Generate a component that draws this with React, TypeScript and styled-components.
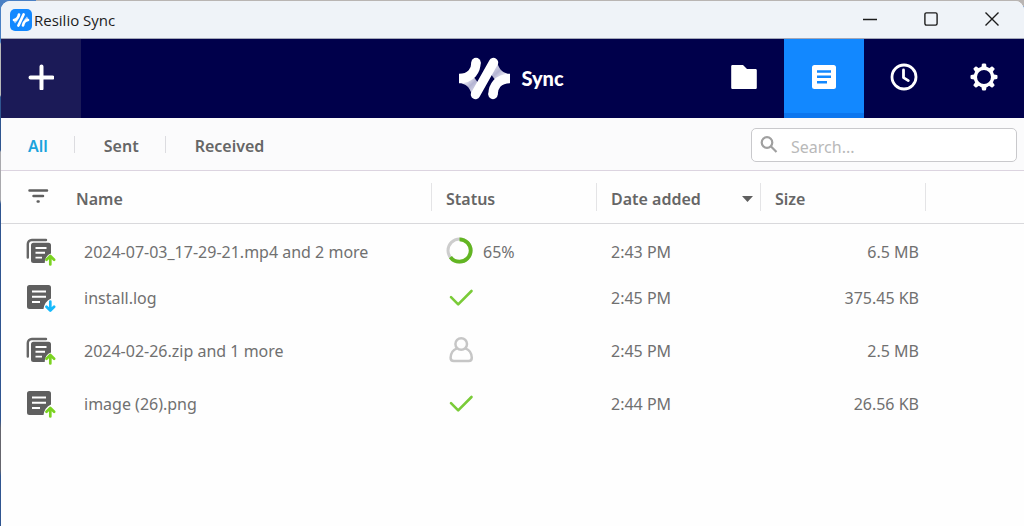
import React, { useState } from "react";
import styled, { createGlobalStyle } from "styled-components";

const GlobalStyle = createGlobalStyle`
  * { box-sizing: border-box; }
  body {
    margin: 0;
    background: #2f5590;
    font-family: "Noto Sans", "Open Sans", sans-serif;
    font-size: 16px;
    color: #707070;
  }
  button, input { font: inherit; }
`;

const Desktop = styled.div`
  min-height: 100vh;
  display: flex;
  padding: 1px 0 0 1px;
  background:
    linear-gradient(to right, #4a80c4 0 36px, #b9b5b3 36px) top / 100% 6px no-repeat,
    linear-gradient(#4a80c4 0 42px, #b8b8b8 44px 95px, #2f5590 97px 150px, #a9a9ad 152px 200px, #2f5590 204px 420px, #65656d 428px 470px, #2f5590 476px);
`;

const Window = styled.div`
  flex: 1;
  min-width: 0;
  display: flex;
  flex-direction: column;
  overflow: hidden;
  background: #fefefe;
  border-radius: 9px 9px 0 0;
`;

const TitleBar = styled.header`
  display: flex;
  align-items: center;
  height: 38px;
  padding: 0 2px 0 9px;
  background: #eff3f8;
  border-bottom: 1px solid #a3a7b8;
`;

const AppName = styled.h1`
  flex: 1;
  margin: 0 0 0 2px;
  font-family: "Open Sans", sans-serif;
  font-size: 15px;
  font-weight: 400;
  line-height: 20px;
  color: #1c1c1c;
`;

const CaptionButton = styled.button`
  display: grid;
  place-items: center;
  width: 61px;
  height: 37px;
  padding: 0 0 1px;
  border: 0;
  background: none;
  color: #1c1c1c;
`;

const Toolbar = styled.nav`
  display: grid;
  grid-template-columns: 1fr auto 1fr;
  align-items: stretch;
  height: 79px;
  background: #00004b;
`;

const ToolGroup = styled.div<{ $end?: boolean }>`
  display: flex;
  justify-content: ${(p) => (p.$end ? "flex-end" : "flex-start")};
`;

const ToolButton = styled.button<{ $tone?: "add" | "active" }>`
  display: grid;
  place-items: center;
  width: 80px;
  padding: 0 0 3px;
  border: 0;
  color: #fff;
  background: ${(p) => (p.$tone === "add" ? "#1b1a57" : p.$tone === "active" ? "#1288ff" : "none")};
  box-shadow: ${(p) => (p.$tone === "active" ? "inset 0 -5px #0c76ee" : "none")};
`;

const Brand = styled.div`
  display: flex;
  align-items: center;
  gap: 10px;
  padding: 0 2px 1px 0;
  color: #fff;
  font-family: Lato, sans-serif;
  font-size: 20px;
  font-weight: 900;
  line-height: 24px;
`;

const FilterBar = styled.div`
  display: flex;
  align-items: center;
  justify-content: space-between;
  height: 53px;
  padding: 2px 7px 0 27px;
  background: #fbfbfc;
  border-bottom: 1px solid #dcd4e0;
`;

const Tabs = styled.div`
  display: flex;
  align-items: center;
`;

const Tab = styled.button<{ $active: boolean }>`
  padding: 2px 0 0;
  border: 0;
  background: none;
  font-weight: 600;
  line-height: 22px;
  color: ${(p) => (p.$active ? "#1ba3dc" : "#666")};
`;

const Divider = styled.span`
  width: 1px;
  height: 17px;
  margin: 0 29px 2px 26px;
  background: #dcdce0;
`;

const SearchBox = styled.label`
  display: flex;
  align-items: center;
  gap: 13px;
  width: 266px;
  height: 34px;
  padding: 0 8px;
  background: #fff;
  border: 1px solid #c9c9cc;
  border-radius: 5px;
  color: #a0a0a0;
`;

const SearchInput = styled.input`
  flex: 1;
  min-width: 0;
  padding: 4px 0 0;
  border: 0;
  outline: 0;
  background: none;
  color: #666;
  &::placeholder { color: #b9b9b9; opacity: 1; }
`;

const Table = styled.table`
  width: 100%;
  table-layout: fixed;
  border-collapse: separate;
  border-spacing: 0;
`;

const Col = styled.col<{ $width?: number }>`
  width: ${(p) => (p.$width ? `${p.$width}px` : "auto")};
`;

const HeadCell = styled.th`
  height: 53px;
  padding: 0;
  border-bottom: 1px solid #d9d9dc;
  text-align: left;
  font-weight: 600;
  color: #666;
`;

const HeadLabel = styled.div`
  display: flex;
  align-items: center;
  justify-content: space-between;
  height: 28px;
  padding: 4px 7px 0 14px;
  border-right: 1px solid #e4e4e6;
`;

const IconButton = styled.button`
  display: block;
  margin: 0 0 3px 27px;
  padding: 0;
  border: 0;
  background: none;
  color: #5f5f5f;
  line-height: 0;
`;

const Row = styled.tr`
  height: 53px;
  &:first-child { height: 47px; }
  &:first-child > td { padding-top: 8px; }
`;

const Cell = styled.td<{ $kind?: "icon" | "name" | "size" }>`
  padding: 0 ${(p) => (p.$kind === "size" ? "7px" : "0")} 0
    ${(p) => (p.$kind === "icon" ? "25px" : p.$kind === "name" ? "22px" : "14px")};
  text-align: ${(p) => (p.$kind === "size" ? "right" : "left")};
  white-space: nowrap;
  overflow: hidden;
  text-overflow: ellipsis;
  line-height: 22px;
`;

const Status = styled.div`
  display: flex;
  align-items: center;
  gap: 9px;
`;

const Icon = styled.svg`
  display: block;
  flex: none;
`;

const AppIcon = () => (
  <Icon width="22" height="22" viewBox="0 0 22 22" aria-hidden="true">
    <rect width="22" height="22" rx="5" fill="#1288ff" />
    <path d="M3.200 11 5 14.500 8 11M18.800 11 17 7.500 14 11" fill="#b9d8fb" />
    <g fill="none" stroke="#fff" strokeWidth="2.700" strokeLinecap="round">
      <path d="M9 5.500C8.500 8.500 7 10.500 4 11" />
      <path d="M13.600 5.500 8.400 16.500" />
      <path d="M13 16.500C13.500 13.500 15 11.500 18 11" />
    </g>
  </Icon>
);

const BrandMark = () => (
  <Icon width="52" height="43" viewBox="0 0 52 43" aria-hidden="true">
    <defs>
      <linearGradient id="foldLeft" x1="0" y1="0" x2="1" y2="1">
        <stop offset="0.200" stopColor="#fff" />
        <stop offset="0.550" stopColor="#b4b4d2" />
        <stop offset="1" stopColor="#f0f0f8" />
      </linearGradient>
      <linearGradient id="foldRight" x1="1" y1="1" x2="0" y2="0">
        <stop offset="0.200" stopColor="#fff" />
        <stop offset="0.550" stopColor="#b4b4d2" />
        <stop offset="1" stopColor="#f0f0f8" />
      </linearGradient>
    </defs>
    <path d="M0 26C6 26.500 11 30 12.500 37L20 27 14 19Z" fill="url(#foldLeft)" />
    <path d="M51 17C45 16.500 40 13 38.500 6L31 16 37 24Z" fill="url(#foldRight)" />
    <g fill="none" stroke="#fff" strokeWidth="9.400">
      <path d="M17 5.500C17 13 12.500 21.500 0 21.500" />
      <path d="M34 37.500C34 30 38.500 21.500 51 21.500" />
      <path d="M34.500 5.500 16.500 37.500" strokeLinecap="round" />
    </g>
    <circle cx="17" cy="5.500" r="4.700" fill="#fff" />
    <circle cx="34" cy="37.500" r="4.700" fill="#fff" />
  </Icon>
);

const PlusIcon = () => (
  <Icon width="26" height="26" viewBox="0 0 26 26" aria-hidden="true">
    <path d="M13.500 2.500V24.500M2.500 13.500H24.500" stroke="currentColor" strokeWidth="4" strokeLinecap="round" />
  </Icon>
);

const FolderIcon = () => (
  <Icon width="26" height="26" viewBox="0 0 26 26" aria-hidden="true">
    <path d="M1.500 1H12l4 4h8.500a1.300 1.300 0 0 1 1.300 1.300v17.400a1.300 1.300 0 0 1-1.300 1.300h-23A1.300 1.300 0 0 1 .2 23.700V2.300A1.300 1.300 0 0 1 1.500 1Z" fill="currentColor" />
  </Icon>
);

const NotesIcon = () => (
  <Icon width="26" height="26" viewBox="0 0 26 26" aria-hidden="true">
    <rect x="1" y="1" width="24" height="24" rx="2.500" fill="currentColor" />
    <path d="M6 7.500H20M6 12.800H20M6 18.200H16" stroke="#1288ff" strokeWidth="2.600" />
  </Icon>
);

const ClockIcon = () => (
  <Icon width="28" height="28" viewBox="0 0 28 28" aria-hidden="true">
    <g fill="none" stroke="currentColor" strokeWidth="2.800">
      <circle cx="14" cy="14" r="12" />
      <path d="M13.500 7V14.600L18.300 17.600" strokeLinecap="round" strokeLinejoin="round" />
    </g>
  </Icon>
);

const GearIcon = () => (
  <Icon width="28" height="28" viewBox="0 0 28 28" aria-hidden="true">
    <circle cx="14" cy="14" r="8.700" fill="none" stroke="currentColor" strokeWidth="3.400" />
    {[0, 45, 90, 135, 180, 225, 270, 315].map((angle) => (
      <path
        key={angle}
        d="M11.200 5 12 1.200Q12.200.5 12.900.5h2.200q.7 0 .9.700L16.800 5Z"
        fill="currentColor"
        transform={`rotate(${angle} 14 14)`}
      />
    ))}
  </Icon>
);

const SearchIcon = () => (
  <Icon width="18" height="18" viewBox="0 0 18 18" aria-hidden="true">
    <g fill="none" stroke="currentColor" strokeWidth="2.200">
      <circle cx="7" cy="6.500" r="5.300" />
      <path d="M10.800 10.300 16.500 16" />
    </g>
  </Icon>
);

const FilterIcon = () => (
  <Icon width="21" height="14" viewBox="0 0 21 14" aria-hidden="true">
    <path d="M1.500 1.500H19M5.500 7H15M9.700 12.500H10.600" stroke="currentColor" strokeWidth="2.500" strokeLinecap="round" />
  </Icon>
);

const SortIcon = () => (
  <Icon width="11" height="6" viewBox="0 0 11 6" aria-hidden="true">
    <path d="M0 0H11L5.500 6Z" fill="#5f5f5f" />
  </Icon>
);

type Direction = "up" | "down";

const FileIcon = ({ direction, stacked }: { direction: Direction; stacked: boolean }) => (
  <Icon width="30" height="28" viewBox="0 0 30 28" role="img" aria-label={direction === "up" ? "Sent" : "Received"}>
    {stacked ? (
      <>
        <path d="M1.800 19.500V6a4 4 0 0 1 4-4H20" fill="none" stroke="#666" strokeWidth="2.400" strokeLinecap="round" />
        <path d="M7.500 4.800H22.500A2.500 2.500 0 0 1 25 7.300V15.500Q19 17.500 18.700 25H7.500A2.500 2.500 0 0 1 5 22.500V7.300A2.500 2.500 0 0 1 7.500 4.800Z" fill="#5f5f5f" />
        <path d="M9.500 10H20.500M9.500 14.800H19M9.500 19.600H16" stroke="#fff" strokeWidth="1.900" />
      </>
    ) : (
      <>
        <path d="M3.500 1H22.500A2.500 2.500 0 0 1 25 3.500V14.500Q18.500 17.500 17.500 25H3.500A2.500 2.500 0 0 1 1 22.500V3.500A2.500 2.500 0 0 1 3.500 1Z" fill="#5f5f5f" />
        <path d="M6 7.500H20M6 12.800H20M6 18H14" stroke="#fff" strokeWidth="2" />
      </>
    )}
    <path
      d={direction === "up" ? "M24.300 26.500V18.500M20.500 21.700 24.300 17.900 28.100 21.700" : "M24.300 17.500V25.500M20.500 22.700 24.300 26.500 28.100 22.700"}
      fill="none"
      stroke={direction === "up" ? "#7bd321" : "#16b9fb"}
      strokeWidth="2.700"
      strokeLinecap="round"
      strokeLinejoin="round"
    />
  </Icon>
);

const ProgressRing = ({ percent }: { percent: number }) => (
  <Icon width="28" height="30" viewBox="0 0 28 30" aria-hidden="true">
    <circle cx="13.500" cy="13.500" r="11.500" fill="none" stroke="#cdcdcd" strokeWidth="3" />
    <circle
      cx="13.500"
      cy="13.500"
      r="11.200"
      fill="none"
      stroke="#62b522"
      strokeWidth="3.800"
      pathLength={100}
      strokeDasharray={`${percent} 100`}
      transform="rotate(-90 13.500 13.500)"
    />
  </Icon>
);

const CheckIcon = () => (
  <Icon width="28" height="28" viewBox="0 0 28 28" role="img" aria-label="Completed">
    <path d="M5 13.200 12.200 20.400 25.500 7" fill="none" stroke="#7acb38" strokeWidth="2.600" strokeLinecap="round" strokeLinejoin="round" />
  </Icon>
);

const PersonIcon = () => (
  <Icon width="28" height="30" viewBox="0 0 28 30" role="img" aria-label="Waiting for peer">
    <g fill="none" stroke="#c6c6c6" strokeWidth="2.500" strokeLinejoin="round">
      <circle cx="15.200" cy="8" r="5.800" />
      <path d="M11 12.300C7 13.800 4.700 17.300 4.600 21.800Q4.600 25.100 7.800 25.100H22.600Q25.800 25.100 25.800 21.800C25.700 17.300 23.400 13.800 19.400 12.300" />
    </g>
  </Icon>
);

type Transfer = {
  name: string;
  stacked: boolean;
  direction: Direction;
  status: "progress" | "done" | "waiting";
  time: string;
  size: string;
};

const transfers: Transfer[] = [
  { name: "2024-07-03_17-29-21.mp4 and 2 more", stacked: true, direction: "up", status: "progress", time: "2:43 PM", size: "6.5 MB" },
  { name: "install.log", stacked: false, direction: "down", status: "done", time: "2:45 PM", size: "375.45 KB" },
  { name: "2024-02-26.zip and 1 more", stacked: true, direction: "up", status: "waiting", time: "2:45 PM", size: "2.5 MB" },
  { name: "image (26).png", stacked: false, direction: "up", status: "done", time: "2:44 PM", size: "26.56 KB" },
];

const tabs = ["All", "Sent", "Received"];

export default function App() {
  const [tab, setTab] = useState("All");
  return (
    <>
      <GlobalStyle />
      <Desktop>
        <Window>
          <TitleBar>
            <AppIcon />
            <AppName>Resilio Sync</AppName>
            <CaptionButton aria-label="Minimize">
              <Icon width="14" height="14" viewBox="0 0 14 14">
                <path d="M0 7.500H14" stroke="currentColor" strokeWidth="1.300" />
              </Icon>
            </CaptionButton>
            <CaptionButton aria-label="Maximize">
              <Icon width="14" height="14" viewBox="0 0 14 14">
                <rect x="0.900" y="0.900" width="12.200" height="12.200" rx="1.500" fill="none" stroke="currentColor" strokeWidth="1.400" />
              </Icon>
            </CaptionButton>
            <CaptionButton aria-label="Close">
              <Icon width="14" height="14" viewBox="0 0 14 14">
                <path d="M.5.5 13.500 13.500M13.500.5.5 13.500" stroke="currentColor" strokeWidth="1.400" />
              </Icon>
            </CaptionButton>
          </TitleBar>
          <Toolbar>
            <ToolGroup>
              <ToolButton $tone="add" aria-label="Add"><PlusIcon /></ToolButton>
            </ToolGroup>
            <Brand><BrandMark />Sync</Brand>
            <ToolGroup $end>
              <ToolButton aria-label="Folders"><FolderIcon /></ToolButton>
              <ToolButton $tone="active" aria-label="Transfers"><NotesIcon /></ToolButton>
              <ToolButton aria-label="History"><ClockIcon /></ToolButton>
              <ToolButton aria-label="Preferences"><GearIcon /></ToolButton>
            </ToolGroup>
          </Toolbar>
          <FilterBar>
            <Tabs>
              {tabs.map((name, i) => (
                <React.Fragment key={name}>
                  {i > 0 && <Divider />}
                  <Tab $active={tab === name} onClick={() => setTab(name)}>{name}</Tab>
                </React.Fragment>
              ))}
            </Tabs>
            <SearchBox>
              <SearchIcon />
              <SearchInput type="text" placeholder="Search..." aria-label="Search" />
            </SearchBox>
          </FilterBar>
          <Table>
            <colgroup>
              <Col $width={61} />
              <Col />
              <Col $width={165} />
              <Col $width={164} />
              <Col $width={165} />
              <Col $width={98} />
            </colgroup>
            <thead>
              <tr>
                <HeadCell><IconButton aria-label="Filter"><FilterIcon /></IconButton></HeadCell>
                <HeadCell><HeadLabel>Name</HeadLabel></HeadCell>
                <HeadCell><HeadLabel>Status</HeadLabel></HeadCell>
                <HeadCell><HeadLabel>Date added<SortIcon /></HeadLabel></HeadCell>
                <HeadCell><HeadLabel>Size</HeadLabel></HeadCell>
                <HeadCell />
              </tr>
            </thead>
            <tbody>
              {transfers.map((t) => (
                <Row key={t.name}>
                  <Cell $kind="icon"><FileIcon direction={t.direction} stacked={t.stacked} /></Cell>
                  <Cell $kind="name">{t.name}</Cell>
                  <Cell>
                    <Status>
                      {t.status === "progress" && <><ProgressRing percent={65} />65%</>}
                      {t.status === "done" && <CheckIcon />}
                      {t.status === "waiting" && <PersonIcon />}
                    </Status>
                  </Cell>
                  <Cell>{t.time}</Cell>
                  <Cell $kind="size">{t.size}</Cell>
                  <Cell />
                </Row>
              ))}
            </tbody>
          </Table>
        </Window>
      </Desktop>
    </>
  );
}
